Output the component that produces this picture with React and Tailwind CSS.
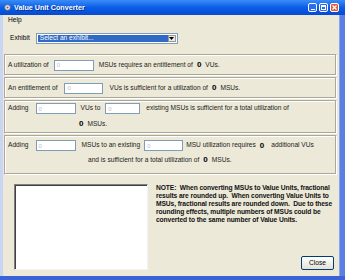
import React from "react";

const Box = ({ w }) => (
  <div
    className={`${w} h-[11px] shrink-0 bg-white border border-[#7f9db9] flex items-center pl-[2px] text-[6px] leading-none text-[#c0c0c0]`}
  >
    0
  </div>
);

const Zero = () => (
  <span className="font-bold text-[8px] leading-none mx-[4px] text-black">0</span>
);

const Panel = ({ className, children }) => (
  <div
    className={`ml-[1px] mr-[2px] border border-t-[#aca899] border-l-[#aca899] border-r-white border-b-white shadow-[inset_-1px_-1px_0_#aca899,inset_1px_1px_0_#fff] ${className}`}
  >
    {children}
  </div>
);

const App = () => {
  return (
    <div className="w-[345px] h-[280px] flex flex-col overflow-hidden font-['Liberation_Sans',Arial,sans-serif] text-[6.6px] leading-none text-[#222]">
      {/* title bar */}
      <div className="h-[15px] shrink-0 flex items-center bg-gradient-to-b from-[#3a8cf6] via-[#0a5de8] to-[#0749d2] pl-[4px] pr-[6px]">
        <svg width="7" height="7" viewBox="0 0 10 10">
          <circle cx="5" cy="5" r="4" fill="#e8e8e8" stroke="#666" strokeWidth="1" />
          <circle cx="5" cy="5" r="1.5" fill="#666" />
        </svg>
        <span className="ml-[3px] text-white font-bold text-[7.2px] [text-shadow:1px_1px_0_#0a2f8a]">
          Value Unit Converter
        </span>
        <div className="ml-auto flex gap-[2px]">
          <div className="w-[9px] h-[9px] rounded-[2px] border border-white bg-[#2b6bf0] flex items-end justify-center pb-[1px]">
            <div className="w-[4px] h-[1.5px] bg-white" />
          </div>
          <div className="w-[9px] h-[9px] rounded-[2px] border border-white bg-[#2b6bf0] flex items-center justify-center">
            <div className="w-[5px] h-[5px] border border-white border-t-2" />
          </div>
          <div className="w-[9px] h-[9px] rounded-[2px] border border-white bg-[#e2583b] flex items-center justify-center">
            <svg width="5" height="5" viewBox="0 0 5 5">
              <path d="M0.5 0.5 L4.5 4.5 M4.5 0.5 L0.5 4.5" stroke="white" strokeWidth="1.2" />
            </svg>
          </div>
        </div>
      </div>

      <div className="flex-1 flex">
        <div className="w-[3px] bg-[#c9d6f3]" />
        <div className="flex-1 bg-[#ece9d8] flex flex-col">
          {/* menu */}
          <div className="h-[11px] flex items-center pl-[5px] text-black">Help</div>

          {/* exhibit */}
          <div className="mt-[7px] flex items-center h-[11px]">
            <span className="ml-[7px] text-black">Exhibit</span>
            <div className="ml-[6px] w-[142px] h-[11px] bg-white border border-[#7f9db9] flex items-center p-[1px]">
              <div className="flex-1 h-full bg-[#316ac5] text-white flex items-center pl-[2px]">
                Select an exhibit...
              </div>
              <div className="w-[8px] h-full bg-[#e8e8e8] border border-[#999] flex items-center justify-center">
                <svg width="5" height="3" viewBox="0 0 5 3">
                  <path d="M0 0 H5 L2.5 3 Z" fill="black" />
                </svg>
              </div>
            </div>
          </div>

          {/* panels */}
          <div className="mt-[10px] flex flex-col gap-[1px]">
            <Panel className="h-[22px] flex items-center pl-[3px]">
              <span>A utilization of</span>
              <div className="ml-[5px]"><Box w="w-[40px]" /></div>
              <span className="ml-[5px]">MSUs requires an entitlement of</span>
              <Zero />
              <span>VUs.</span>
            </Panel>
            <Panel className="h-[22px] flex items-center pl-[3px]">
              <span>An entitlement of</span>
              <div className="ml-[7px]"><Box w="w-[39px]" /></div>
              <span className="ml-[6px]">VUs is sufficient for a utilization of</span>
              <Zero />
              <span>MSUs.</span>
            </Panel>
            <Panel className="h-[34px] flex flex-col pl-[3px] pt-[2px]">
              <div className="flex items-center h-[11px]">
                <span>Adding</span>
                <div className="ml-[7px]"><Box w="w-[40px]" /></div>
                <span className="ml-[5px]">VUs to</span>
                <div className="ml-[5px]"><Box w="w-[35px]" /></div>
                <span className="ml-[6px]">existing MSUs is sufficient for a total utilization of</span>
              </div>
              <div className="flex items-center h-[8px] mt-[6px] ml-[67px]">
                <Zero />
                <span>MSUs.</span>
              </div>
            </Panel>
            <Panel className="h-[40px] flex flex-col pl-[3px] pt-[4px]">
              <div className="flex items-center h-[11px]">
                <span>Adding</span>
                <div className="ml-[7px]"><Box w="w-[40px]" /></div>
                <span className="ml-[6px]">MSUs to an existing</span>
                <div className="ml-[4px]"><Box w="w-[39px]" /></div>
                <span className="ml-[3px]">MSU utilization requires</span>
                <Zero />
                <span className="ml-[3px]">additional VUs</span>
              </div>
              <div className="flex items-center h-[8px] mt-[5px] ml-[80px]">
                <span>and is sufficient for a total utilization of</span>
                <Zero />
                <span>MSUs.</span>
              </div>
            </Panel>
          </div>

          {/* bottom */}
          <div className="flex-1 flex mt-[9px] pb-[6px]">
            <div className="ml-[11px] w-[134px] bg-white border border-t-[#808080] border-l-[#808080] border-r-[#f4f4f4] border-b-[#f4f4f4] shadow-[inset_1px_1px_0_#404040]" />
            <div className="flex-1 flex flex-col ml-[8px] mr-[1px]">
              <p className="font-bold text-[6.7px] leading-[8px] text-[#111] tracking-[-0.1px]">
                NOTE:&nbsp; When converting MSUs to Value Units, fractional results are rounded up.&nbsp; When converting Value Units to MSUs, fractional results are rounded down.&nbsp; Due to these rounding effects, multiple numbers of MSUs could be converted to the same number of Value Units.
              </p>
              <div className="mt-auto self-end mr-[4px]">
                <div className="w-[33px] h-[14px] rounded-[2px] border border-[#003c74] bg-gradient-to-b from-white to-[#e3e1d6] flex items-center justify-center text-black">
                  Close
                </div>
              </div>
            </div>
          </div>
        </div>
        <div className="w-[6px] bg-[#5b7fe2] border-l border-[#8aa6ee]" />
      </div>
      <div className="h-[4px] shrink-0 bg-[#3d62d6]" />
    </div>
  );
};

export default App;
